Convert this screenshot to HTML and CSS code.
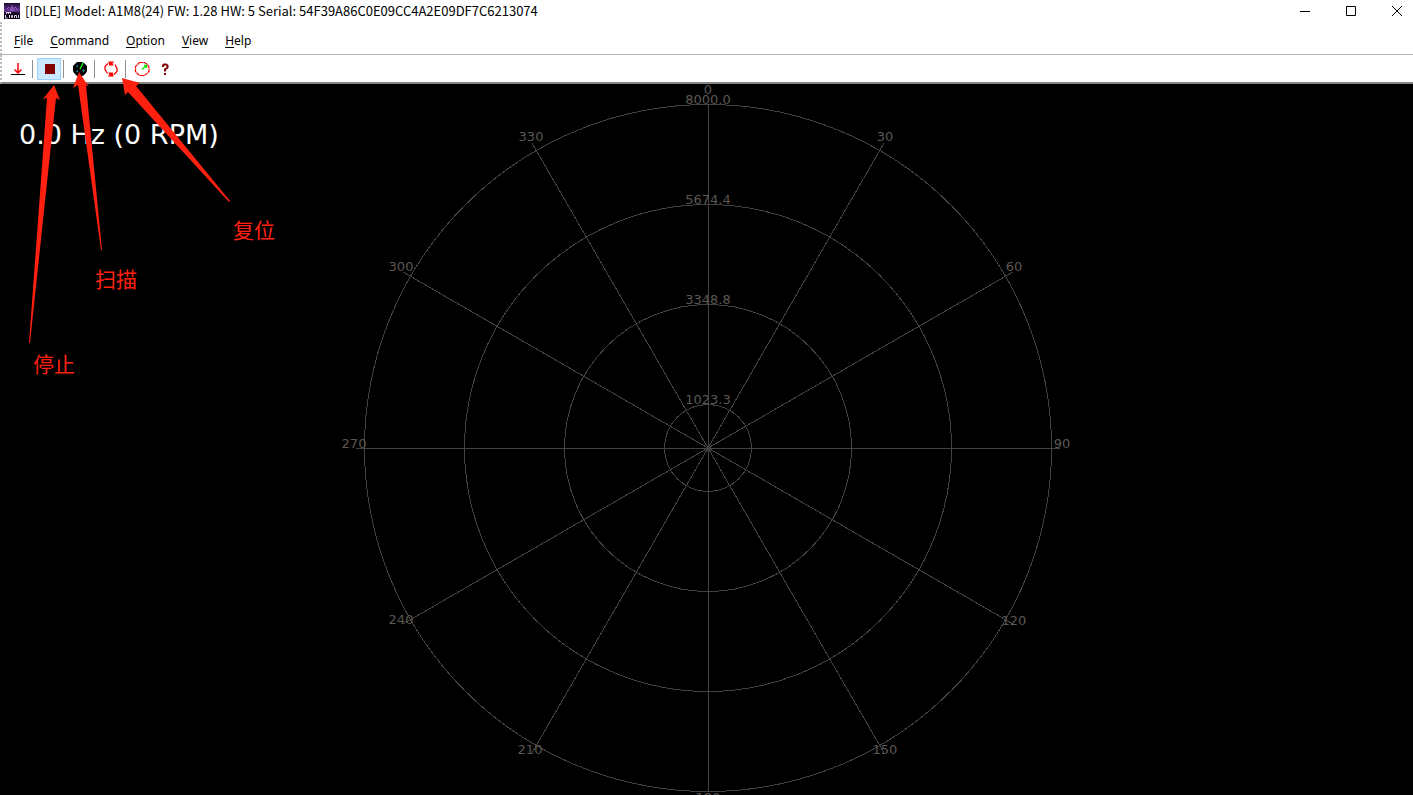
FILE: index.html
```html
<!DOCTYPE html>
<html lang="en">
<head>
<meta charset="utf-8">
<title>[IDLE] Model: A1M8(24)</title>
<link rel="stylesheet" href="styles.css">
</head>
<body>
<div class="window">
  <header class="titlebar">
    <svg class="app-icon" viewBox="0 0 16 16" aria-hidden="true">
      <defs><linearGradient id="sky" x1="0" y1="0" x2="0" y2="1"><stop offset="0" stop-color="#1a0a2c"/><stop offset=".5" stop-color="#6c35a0"/><stop offset=".62" stop-color="#12051c"/><stop offset="1" stop-color="#0a0410"/></linearGradient></defs>
      <rect width="16" height="16" fill="url(#sky)"/>
      <path d="M5 7h6M6 5h5M8 2v6M11 4l3 3M3 6l2-2" stroke="#b57be0" opacity=".7"/>
      <path d="M2 9.500h5M2.500 9v2M4.500 9v2M6.500 9v2M1.500 12v3h2M5.500 12v3M7.500 12.500h1v2h-1zM10.500 15v-2.500h2V15M14.500 12v3" stroke="#d9cfe4" fill="none"/>
    </svg>
    <h1 class="title">[IDLE] Model: A1M8(24) FW: 1.28 HW: 5 Serial: 54F39A86C0E09CC4A2E09DF7C6213074</h1>
    <div class="window-buttons">
      <button aria-label="Minimize"><svg viewBox="0 0 10 10"><path d="M0 5.500h10"/></svg></button>
      <button aria-label="Maximize"><svg viewBox="0 0 10 10"><path d="M.5.500h9v9h-9z"/></svg></button>
      <button aria-label="Close"><svg viewBox="0 0 10 10"><path d="M0 0l10 10M10 0L0 10"/></svg></button>
    </div>
  </header>
  <nav class="menubar">
    <button><u>F</u>ile</button>
    <button><u>C</u>ommand</button>
    <button><u>O</u>ption</button>
    <button><u>V</u>iew</button>
    <button><u>H</u>elp</button>
  </nav>
  <div class="toolbar" role="toolbar">
    <button aria-label="Save"><svg viewBox="0 0 16 16"><path d="M8 2v10M4.500 8.500L8 12l3.500-3.500" fill="none" stroke="#f00" stroke-width="1.500"/><path d="M1 13.500h14" stroke="#000"/></svg></button>
    <span class="separator"></span>
    <button class="active" aria-label="Stop"><svg viewBox="0 0 16 16"><path d="M4 3h10v10H4z" fill="#800000"/></svg></button>
    <span class="separator"></span>
    <button aria-label="Scan"><svg viewBox="0 0 16 16"><path d="M5 1h5l2 1 3 3v5l-1 2-3 3H5l-3-3-1-2V5l1-1z" fill="#000"/><path d="M4 5.500h2M5.500 4v2M10 9.500h3M11.500 8v3M4 10.500h2M5.500 9v2" stroke="#007c80"/><path d="M8 8l3-6" stroke="#0f0" stroke-width="1.400"/></svg></button>
    <span class="separator"></span>
    <button aria-label="Reset"><svg viewBox="0 0 16 16" fill="none" stroke="#f00" stroke-width="1.300"><path d="M5 2.500L2 5.500v3l2.500 4M11 13.500l3-3v-3L12 3.500"/><path d="M5.500 .5H11v1H9.500l1 3H6v-2h-.5zM10.500 15.500H5v-1h1.500l-1-3H10v2h.5z" fill="#f00" stroke="none"/></svg></button>
    <span class="separator"></span>
    <button aria-label="Motor speed"><svg viewBox="0 0 16 16" fill="none"><path d="M5.500 1.500h5l3 2 1.500 3v4l-4.500 4h-5l-4-4v-5z" stroke="#f00" stroke-width="1.200" stroke-dasharray="4 .5"/><path d="M8 8.500l4.500-4M10 4.500h2.500V7" stroke="#0e0" stroke-width="1.300"/></svg></button>
    <button aria-label="About"><svg viewBox="0 0 16 16" fill="none"><path d="M5 6V4.500L6 3.500h2l1.500 1v2L7 8.500V10.500" stroke="#800000" stroke-width="2"/><path d="M6 12h2v2H6z" fill="#800000"/></svg></button>
  </div>
  <main class="scope">
    <svg class="radar" viewBox="-708 -364 1413 711" preserveAspectRatio="xMidYMin slice" role="img" aria-label="Scan view">
      <g class="grid">
        <circle cx="0" cy="0" r="43.500"/><circle cx="0" cy="0" r="143.500"/><circle cx="0" cy="0" r="243.500"/><circle cx="0" cy="0" r="343.500"/>
        <path d="M.5-343V343M-352 .5H352M-176-305L176 305M176-305L-176 305M-305-176L305 176M305-176L-305 176"/>
      </g>
      <circle class="hub" cx="0.500" cy="0.500" r="2.500"/>
      <g class="labels">
        <text x="0" y="-354">0</text><text x="0" y="-344">8000.0</text><text x="0" y="-244">5674.4</text><text x="0" y="-144">3348.8</text><text x="0" y="-44">1023.3</text>
        <text x="177" y="-307">30</text><text x="306" y="-177">60</text><text x="354" y="0">90</text><text x="306" y="177">120</text><text x="177" y="306">150</text><text x="0" y="354">180</text>
        <text x="-178" y="306">210</text><text x="-307" y="176">240</text><text x="-354" y="0">270</text><text x="-307" y="-177">300</text><text x="-177" y="-307">330</text>
      </g>
    </svg>
    <p class="speed">0.0 Hz (0 RPM)</p>
  </main>
  <svg class="notes" viewBox="0 0 300 400" width="300" height="400" role="img" aria-label="Toolbar notes">
    <path d="M54 85L60 100 56 98 30 343H29L47 98 43 99z"/>
    <path d="M79 72L89 87 86 85 102 250H101L78 85 73 88z"/>
    <path d="M122 78L140 83 136 86 230 201 229 202 128 92 125 95z"/>
    <text x="233" y="238">复位</text><text x="95" y="287">扫描</text><text x="33" y="372">停止</text>
  </svg>
</div>
</body>
</html>
```
FILE: styles.css
```css
* { box-sizing: border-box; }
body { margin: 0; background: #fff; color: #000; font: 12px "Noto Sans", "Open Sans", sans-serif; }
button { border: 0; padding: 0; background: none; color: inherit; font: inherit; }
.window { position: relative; display: flex; flex-direction: column; height: 100vh; overflow: hidden; }
.titlebar { display: flex; align-items: center; height: 22px; padding-left: 4px; }
.app-icon { width: 16px; height: 16px; margin-right: 5px; }
.title { flex: 1; margin: 0; font: 400 13px/18px "Noto Sans CJK SC", "Noto Sans", sans-serif; white-space: nowrap; }
.window-buttons { display: flex; gap: 14px; }
.window-buttons button { display: grid; place-items: center; width: 32px; height: 22px; }
.window-buttons svg { width: 10px; height: 10px; fill: none; stroke: #000; }
.menubar, .toolbar { display: flex; align-items: center; border-left: 2px dotted #bbb; }
.menubar { gap: 17px; height: 33px; padding: 4px 0 0 12px; border-bottom: 1px solid #b4b4b4; }
.menubar u { text-underline-offset: 2px; }
.toolbar { height: 29px; padding-left: 4px; border-bottom: 2px solid #858585; }
.toolbar button { display: grid; place-items: center; width: 24px; height: 22px; }
.toolbar button.active { border: 1px solid #99d1ff; background: #cce8ff; }
.toolbar svg { width: 16px; height: 16px; }
.separator { width: 1px; height: 18px; margin: 0 4px 0 2px; background: #8d8d8d; }
.scope { position: relative; flex: 1; min-height: 0; overflow: hidden; background: #000; }
.radar { display: block; width: 100%; height: 100%; }
.grid { fill: none; stroke: #424242; stroke-width: 1px; shape-rendering: crispEdges; }
.hub { fill: #424242; }
.labels { fill: #5c5753; font: 13px "DejaVu Sans", sans-serif; text-anchor: middle; }
.speed { position: absolute; top: 35px; left: 19px; margin: 0; color: #fff; font: 27px/32px "DejaVu Sans", sans-serif; white-space: nowrap; }
.notes { position: absolute; top: 0; left: 0; fill: #ff2010; font: 21px "Noto Sans CJK SC", sans-serif; pointer-events: none; }
```
